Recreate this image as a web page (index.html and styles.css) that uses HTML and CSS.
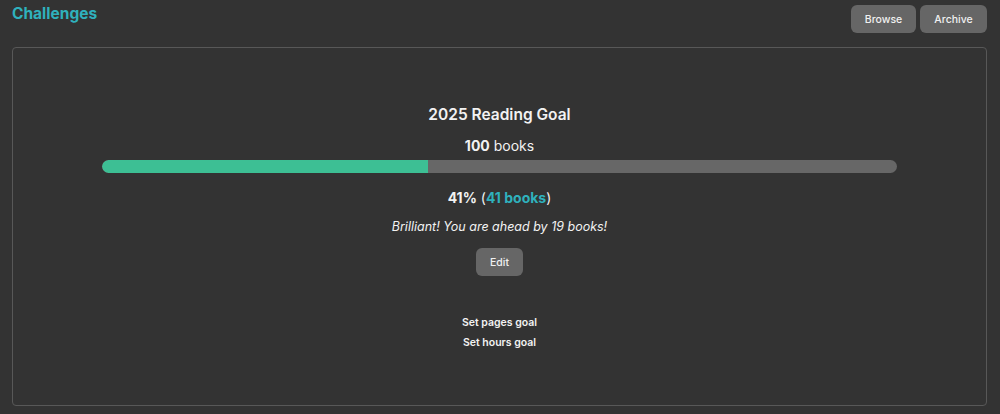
FILE: index.html
```html
<!DOCTYPE html>
<html>
<head>
<meta charset="utf-8">
<link rel="stylesheet" href="styles.css">
</head>
<body>
<div class="page">
  <header class="top">
    <h1 class="title">Challenges</h1>
    <div class="actions">
      <button class="btn">Browse</button>
      <button class="btn">Archive</button>
    </div>
  </header>
  <section class="card">
    <h2 class="goal-title">2025 Reading Goal</h2>
    <div class="target"><b>100</b> books</div>
    <div class="bar"><div class="fill" style="width:41%"></div></div>
    <div class="progress"><b>41%</b> (<span class="accent">41 books</span>)</div>
    <div class="msg">Brilliant! You are ahead by 19 books!</div>
    <button class="btn edit">Edit</button>
    <div class="links">
      <a class="link">Set pages goal</a>
      <a class="link">Set hours goal</a>
    </div>
  </section>
</div>
</body>
</html>
```
FILE: styles.css
```css
* { box-sizing: border-box; }
html, body { margin: 0; padding: 0; background: #333333; }
body { font-family: "Inter", "Noto Sans", sans-serif; color: #f2f2f2; width: 1000px; height: 414px; overflow: hidden; }
.page { padding: 5px 13px 0 12px; }
.top { display: flex; justify-content: space-between; align-items: flex-start; height: 42px; }
.title { margin: -1px 0 0 0; font-size: 15.5px; font-weight: 700; color: #2fb1bd; letter-spacing: 0; }
.actions { display: flex; gap: 4px; }
.btn { font-family: inherit; background: #666666; color: #f0f0f0; border: none; border-radius: 6px; font-size: 10.5px; font-weight: 500; height: 28px; padding: 0 12px; }
.actions .btn:first-child { width: 65px; }
.actions .btn:last-child { width: 67px; }
.card { border: 1px solid #585858; border-radius: 4px; height: 359px; display: flex; flex-direction: column; align-items: center; padding: 56px 89px 0 89px; }
.goal-title { margin: 0; font-size: 15.5px; font-weight: 600; height: 22px; line-height: 22px; }
.target { margin-top: 10px; font-size: 14px; font-weight: 400; line-height: 20px; }
.target b { font-weight: 700; }
.bar { margin-top: 4px; width: 100%; height: 13px; background: #676767; border-radius: 7px; overflow: hidden; }
.fill { height: 100%; background: #3dbf94; border-radius: 7px 0 0 7px; }
.progress { margin-top: 15px; font-size: 14px; line-height: 20px; }
.progress b { font-weight: 700; }
.accent { color: #2fb1bd; font-weight: 700; }
.msg { margin-top: 10px; font-size: 12.5px; font-style: italic; line-height: 18px; }
.edit { margin-top: 12px; width: 47px; padding: 0; font-size: 10.5px; }
.links { margin-top: 38px; display: flex; flex-direction: column; align-items: center; gap: 3px; }
.link { font-size: 10.5px; font-weight: 600; line-height: 17px; color: #f2f2f2; }
```
